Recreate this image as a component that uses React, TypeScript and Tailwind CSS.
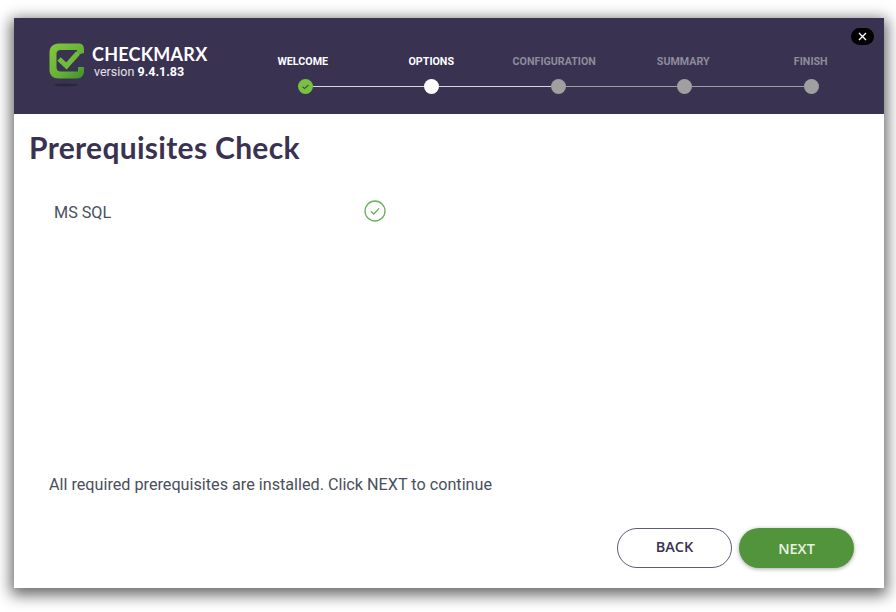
import React from 'react';

const steps = [
    { label: 'WELCOME', state: 'done', cls: 'w-[126.5px] text-center pr-[5px]' },
    { label: 'OPTIONS', state: 'current', cls: 'w-[126.5px] text-center pr-[1px]' },
    { label: 'CONFIGURATION', state: 'todo', cls: 'w-[126.5px] text-center pr-[8px]' },
    { label: 'SUMMARY', state: 'todo', cls: 'w-[126.5px] text-center pr-[3px]' },
    { label: 'FINISH', state: 'todo', cls: 'w-[126.5px] text-center pr-[1px]' },
];

function Logo() {
    return (
        <svg width="38" height="46" viewBox="0 0 38 46" className="shrink-0">
            <defs>
                <linearGradient id="cxg" x1="0" y1="0" x2="1" y2="1">
                    <stop offset="0" stopColor="#86c83f" />
                    <stop offset="0.6" stopColor="#64b136" />
                    <stop offset="1" stopColor="#3f8f2c" />
                </linearGradient>
            </defs>
            <ellipse cx="17" cy="42" rx="12" ry="1.5" fill="#2a2640" />
            <path
                d="M10 0.5 H30 C33 0.5 35 2.5 35 6.5 L35 10 L28 12 L28 7 H12 C9 7 7.5 8.5 7.5 11 V24 C7.5 27 9 28.5 12 28.5 H29 V24 H35 V28 C35 32 32.5 35.5 28 35.5 H10 C4 35.5 0.5 32 0.5 27 V10 C0.5 4 4 0.5 10 0.5 Z"
                fill="url(#cxg)"
            />
            <path d="M10 16 L17.5 23 L29 10" fill="none" stroke="#72bb3a" strokeWidth="5" />
        </svg>
    );
}

function StepDot({ state }: { state: string }) {
    if (state === 'done') {
        return (
            <div className="w-[15px] h-[15px] rounded-full bg-[#7ac143] flex items-center justify-center shrink-0">
                <svg width="9" height="9" viewBox="0 0 9 9">
                    <path d="M1.5 4.8 L3.6 6.4 L7.5 3" fill="none" stroke="#3d5a3a" strokeWidth="1.2" />
                </svg>
            </div>
        );
    }
    if (state === 'current') return <div className="w-[15px] h-[15px] rounded-full bg-white shrink-0" />;
    return <div className="w-[15px] h-[15px] rounded-full bg-[#a0a0a0] shrink-0" />;
}

export default function App() {
    return (
        <div className="w-[896px] h-[612px] bg-white pt-[18px] pl-[14px] overflow-hidden">
            <div className="relative w-[870px] h-[570px] bg-white flex flex-col shadow-[0_4px_14px_3px_rgba(0,0,0,0.6)]">
                {/* header */}
                <div className="h-[96px] bg-[#393251] flex shrink-0">
                    <div className="w-[228px] pl-[35px] pt-[25px] flex gap-[5px] shrink-0">
                        <Logo />
                        <div className="flex flex-col gap-[1px] pt-[1px]">
                            <span className="font-['Lato'] font-bold text-[18px] leading-[20px] tracking-[0.25px] text-white whitespace-nowrap">
                                CHECKMARX
                            </span>
                            <span className="font-['Roboto'] text-[12.5px] leading-[14px] text-[#e4e2ea] pl-[2px] whitespace-nowrap">
                                version <span className="font-bold text-white">9.4.1.83</span>
                            </span>
                        </div>
                    </div>
                    {/* stepper */}
                    <div className="flex flex-col pt-[36px]">
                        <div className="flex">
                            {steps.map((s) => (
                                <div key={s.label} className={s.cls}>
                                    <span
                                        className={
                                            s.state === 'todo'
                                                ? "block font-['Roboto'] font-bold text-[10.7px] leading-[15px] text-[#8f8c9b]"
                                                : "block font-['Roboto'] font-bold text-[10.7px] leading-[15px] text-white"
                                        }
                                    >
                                        {s.label}
                                    </span>
                                </div>
                            ))}
                        </div>
                        <div className="flex items-center w-[521px] ml-[55.5px] mt-[10px]">
                            <StepDot state="done" />
                            <div className="flex-1 h-[1px] bg-[#d8d6de]" />
                            <StepDot state="current" />
                            <div className="flex-1 h-[1px] bg-[#d8d6de]" />
                            <StepDot state="todo" />
                            <div className="flex-1 h-[1px] bg-[#a0a0a0]" />
                            <StepDot state="todo" />
                            <div className="flex-1 h-[1px] bg-[#a0a0a0]" />
                            <StepDot state="todo" />
                        </div>
                    </div>
                </div>

                <button className="absolute left-[837px] top-[10px] w-[23px] h-[17px] rounded-full bg-black flex items-center justify-center">
                    <svg width="9" height="9" viewBox="0 0 9 9">
                        <path d="M1 1 L8 8 M8 1 L1 8" stroke="#fff" strokeWidth="1.4" />
                    </svg>
                </button>

                {/* body */}
                <div className="flex-1 flex flex-col">
                    <h1 className="font-['Lato'] font-bold text-[30px] leading-[40px] text-[#393251] pl-[15px] pt-[13px] tracking-[0.3px]">
                        Prerequisites Check
                    </h1>
                    <div className="flex items-center pl-[40px] pt-[34px]">
                        <span className="w-[310px] font-['Roboto'] text-[16.2px] leading-[24px] text-[#4a4f5c]">MS SQL</span>
                        <svg width="22" height="22" viewBox="0 0 22 22" className="-mt-[4px]">
                            <circle cx="11" cy="11" r="10" fill="none" stroke="#6aaf5c" strokeWidth="1.3" />
                            <path d="M6.8 11.3 L9.8 14 L15.2 8.4" fill="none" stroke="#6aaf5c" strokeWidth="1.3" />
                        </svg>
                    </div>
                    <div className="flex-1" />
                    <p className="font-['Roboto'] text-[16.2px] leading-[24px] text-[#4a4f5c] pl-[35px]">
                        All required prerequisites are installed. Click NEXT to continue
                    </p>
                    <div className="flex justify-end gap-[7px] pr-[30px] pt-[31px] pb-[20px]">
                        <button className="w-[115px] h-[40px] pb-[2px] rounded-full border border-[#5f5a78] bg-white font-['Open_Sans'] font-semibold text-[14.5px] text-[#393251]">
                            BACK
                        </button>
                        <button className="w-[115px] h-[40px] pt-[1px] rounded-full bg-[#52943c] font-['Open_Sans'] font-semibold text-[14.5px] text-[#e8f2e2] shadow-[0_1px_4px_rgba(0,0,0,0.35)]">
                            NEXT
                        </button>
                    </div>
                </div>
            </div>
        </div>
    );
}
